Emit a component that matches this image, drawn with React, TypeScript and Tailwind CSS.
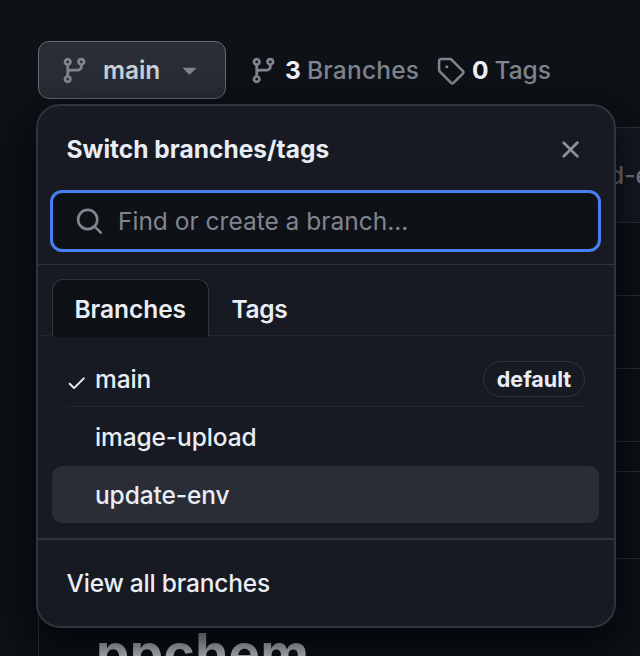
import React from "react";

const BRANCH =
  "M9.5 3.25a2.25 2.25 0 1 1 3 2.122V6A2.5 2.5 0 0 1 10 8.5H6a1 1 0 0 0-1 1v1.128a2.251 2.251 0 1 1-1.5 0V5.372a2.25 2.25 0 1 1 1.5 0v1.836A2.493 2.493 0 0 1 6 7h4a1 1 0 0 0 1-1v-.628A2.25 2.25 0 0 1 9.5 3.25Zm-6 0a.75.75 0 1 0 1.5 0 .75.75 0 0 0-1.5 0Zm8.25-.75a.75.75 0 1 0 0 1.5.75.75 0 0 0 0-1.5ZM4.25 12a.75.75 0 1 0 0 1.5.75.75 0 0 0 0-1.5Z";
const CLOSE =
  "M3.72 3.72a.75.75 0 0 1 1.06 0L8 6.94l3.22-3.22a.749.749 0 0 1 1.275.326.749.749 0 0 1-.215.734L9.06 8l3.22 3.22a.749.749 0 0 1-.326 1.275.749.749 0 0 1-.734-.215L8 9.06l-3.22 3.22a.751.751 0 0 1-1.042-.018.751.751 0 0 1-.018-1.042L6.94 8 3.72 4.78a.75.75 0 0 1 0-1.06Z";
const CHECK =
  "M13.78 4.22a.75.75 0 0 1 0 1.06l-7.25 7.25a.75.75 0 0 1-1.06 0L2.22 9.28a.751.751 0 0 1 .018-1.042.751.751 0 0 1 1.042-.018L6 10.94l6.72-6.72a.75.75 0 0 1 1.06 0Z";
const TRIANGLE =
  "m4.427 7.427 3.396 3.396a.25.25 0 0 0 .354 0l3.396-3.396A.25.25 0 0 0 11.396 7H4.604a.25.25 0 0 0-.177.427Z";

function Icon({ d, className }: { d: string; className: string }) {
  return (
    <svg viewBox="0 0 16 16" fill="currentColor" aria-hidden="true" className={`shrink-0 ${className}`}>
      <path d={d} />
    </svg>
  );
}

function TagIcon() {
  return (
    <svg viewBox="0 0 16 16" fill="none" stroke="currentColor" strokeWidth="1.4" aria-hidden="true" className="size-[29px] shrink-0">
      <path d="M1.7 7.775V2.75C1.7 2.15 2.15 1.7 2.75 1.7h5.025c.28 0 .54.11.74.31l6.25 6.25a1.05 1.05 0 0 1 0 1.48l-5.026 5.026a1.05 1.05 0 0 1-1.48 0L2.01 8.515a1.05 1.05 0 0 1-.31-.74Z" />
      <circle cx="5.95" cy="5.9" r="0.85" fill="currentColor" stroke="none" />
    </svg>
  );
}

function SearchIcon() {
  return (
    <svg viewBox="0 0 16 16" fill="none" stroke="currentColor" strokeWidth="1.45" strokeLinecap="round" aria-hidden="true" className="size-[29px] shrink-0">
      <circle cx="7" cy="6.9" r="5.3" />
      <path d="m10.9 10.8 3.35 3.35" />
    </svg>
  );
}

function Toolbar() {
  return (
    <div className="flex h-[58px] items-center pl-[38px] text-[#80858f]">
      <button className="flex h-[58px] w-[188px] items-center rounded-[11px] border border-[#666a74] bg-[#2a2d35] pl-[21px]">
        <Icon d={BRANCH} className="size-[29px]" />
        <span className="ml-[14px] w-[57px] text-left text-[24.5px] font-semibold tracking-[-0.1px] text-[#c9d1d9]">main</span>
        <Icon d={TRIANGLE} className="-mt-[2px] ml-[15px] size-[29px]" />
      </button>
      <a className="ml-[23px] flex items-center">
        <Icon d={BRANCH} className="size-[29px]" />
        <span className="ml-[7px] w-[16px] text-[24.5px] font-bold tracking-[-0.5px] text-[#f0f3f8]">3</span>
        <span className="ml-[6px] w-[112px] text-[24.5px] font-medium tracking-[0.2px]">Branches</span>
      </a>
      <a className="ml-[17px] flex items-center">
        <TagIcon />
        <span className="ml-[7px] w-[16px] text-[24.5px] font-bold tracking-[-0.5px] text-[#f0f3f8]">0</span>
        <span className="ml-[6.5px] text-[24.5px] font-medium">Tags</span>
      </a>
    </div>
  );
}

function Repository() {
  return (
    <div className="flex flex-col pl-[38px] pt-[28px]">
      <div className="flex h-[315px] flex-col border-y border-l border-[#30343b]">
        <div className="flex h-[95px] items-center border-b border-[#30343b] bg-[#161a21] pl-[570px] text-[24.5px] font-medium text-[#80858f]">
          <span className="whitespace-nowrap">d-e</span>
        </div>
        <div className="h-[73px] border-b border-[#30343b]" />
        <div className="h-[73px] border-b border-[#30343b]" />
      </div>
      <div className="mt-[29px] flex h-[300px] flex-col border-l border-t border-[#30343b]">
        <div className="h-[87px] shrink-0 border-b border-[#30343b]" />
        <h1 className="pl-[57px] pt-[62px] text-[53px] font-bold leading-[64px] tracking-[0.4px] text-[#d8dbe0]">ppchem</h1>
      </div>
    </div>
  );
}

function SwitchMenu() {
  return (
    <div className="absolute left-[36px] top-[104px] flex h-[524px] w-[580px] flex-col rounded-[24px] border-2 border-[#2f343a] bg-[#171a22] text-[24.5px] text-[#e9edf5] shadow-[0_16px_44px_4px_rgba(1,4,9,0.85)]">
      <div className="flex h-[84px] shrink-0 items-center justify-between pl-[28.5px] pr-[29px] pt-[3px]">
        <h2 className="font-bold tracking-[0.02px]">Switch branches/tags</h2>
        <Icon d={CLOSE} className="size-[29px] text-[#8b909a]" />
      </div>
      <div className="ml-[12px] flex h-[62px] w-[551px] shrink-0 items-center rounded-[12px] border-[3px] border-[#4680f0] bg-[#0e1116] pl-[22px] text-[#80858f]">
        <SearchIcon />
        <span className="ml-[14px]">Find or create a branch...</span>
      </div>
      <div className="mt-[12px] flex h-[72px] shrink-0 items-end border-b border-t border-b-[#22262d] border-t-[#2f343a] pl-[14px] font-semibold">
        <div className="-mb-[2px] flex h-[58px] w-[157px] items-center rounded-t-[11px] border border-b-0 border-[#2f343a] bg-[#0e1116] pl-[21.5px] pt-[2px] tracking-[-0.05px]">
          Branches
        </div>
        <div className="-mb-[2px] flex h-[58px] items-center pl-[22.5px] pt-[3px] tracking-[-0.3px]">Tags</div>
      </div>
      <div className="flex h-[202px] shrink-0 flex-col px-[14px] pt-[14px] font-[450]">
        <div className="ml-[14px] mr-[15px] flex h-[57px] items-center border-b border-[#22262d] pt-[2px]">
          <Icon d={CHECK} className="mt-[8px] size-[21.5px]" />
          <span className="ml-[7.5px] tracking-[-0.1px]">main</span>
          <span className="ml-auto flex h-[36px] w-[102px] items-center justify-center rounded-full border border-[#30343c] text-[21.5px] font-bold">
            default
          </span>
        </div>
        <div className="flex h-[59px] items-center pl-[43px] pt-[2px] tracking-[-0.12px]">image-upload</div>
        <div className="flex h-[57px] w-[547px] shrink-0 items-center rounded-[10px] bg-[#2a2d35] pl-[43px] pt-[2px] tracking-[-0.12px]">
          update-env
        </div>
      </div>
      <div className="flex flex-1 items-center border-t-2 border-[#2f343a] pl-[28.5px] font-[450] tracking-[-0.2px]">View all branches</div>
    </div>
  );
}

export default function App() {
  return (
    <div className="relative h-[656px] w-[640px] overflow-hidden bg-[#0e1116] pt-[41px] font-['Inter',sans-serif]">
      <Toolbar />
      <Repository />
      <SwitchMenu />
    </div>
  );
}
